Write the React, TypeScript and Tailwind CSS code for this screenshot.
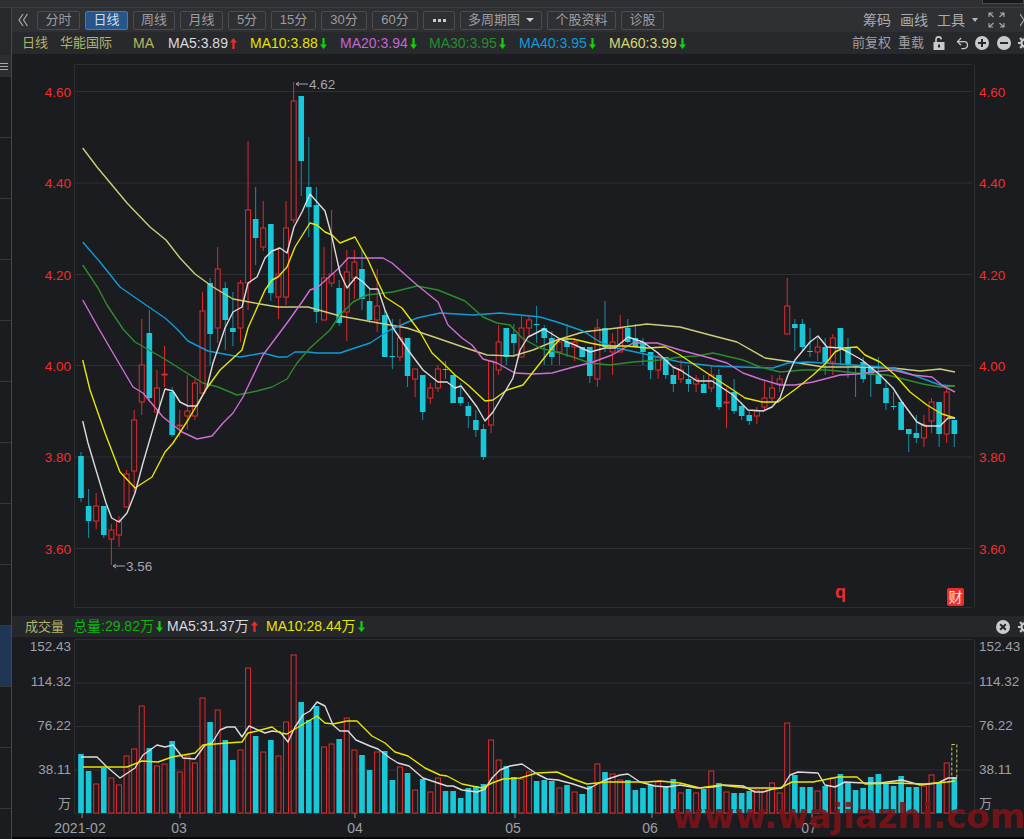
import { Undo2 } from "lucide-react"

type Candle = [number, number, number, number, number]

// high, body top, body bottom, low, 1 = red
const candles: Candle[] = [
  [452,456,498,502,0],[489,506,521,538,0],[493,506,521,529,1],[506,506,535,538,0],[524,530,539,565,1],
  [516,521,535,547,1],[470,474,507,507,1],[410,420,471,493,1],[319,365,402,415,1],[310,333,398,402,0],
  [370,388,412,413,1],[346,374,374,387,1],[387,392,435,437,0],[410,425,425,437,1],[375,411,416,430,1],
  [379,383,416,420,1],[292,311,393,393,1],[278,283,334,365,0],[247,269,328,343,1],[282,288,320,350,0],
  [292,328,332,346,0],[280,283,328,342,1],[141,210,283,310,1],[187,219,238,265,0],[201,228,247,251,1],
  [224,224,293,301,0],[247,274,297,319,1],[201,228,297,305,1],[82,101,220,223,1],[96,96,161,196,0],
  [137,187,207,237,0],[187,205,312,323,0],[247,278,320,320,1],[210,274,283,287,1],[280,288,323,326,0],
  [250,272,312,341,1],[250,262,278,299,1],[250,269,299,310,0],[288,301,320,323,0],[269,306,320,332,1],
  [310,315,357,357,0],[319,356,356,369,0],[319,338,357,361,1],[338,338,376,387,0],[369,369,379,397,1],
  [375,375,412,420,0],[383,388,398,404,1],[365,369,388,392,1],[361,369,369,379,0],[375,375,403,403,0],
  [383,397,403,406,0],[402,406,416,428,0],[410,420,430,437,0],[424,429,457,460,0],[361,361,425,433,1],
  [325,342,370,375,1],[328,328,357,365,0],[324,334,343,357,0],[316,328,357,357,1],[315,320,328,337,1],
  [306,324,324,343,0],[325,328,338,365,0],[331,338,357,365,0],[338,342,352,365,1],[324,342,347,357,0],
  [338,342,347,361,1],[347,347,357,357,0],[347,347,376,383,0],[319,328,379,387,1],[301,328,347,352,0],
  [333,342,352,375,1],[315,328,352,352,1],[319,328,342,343,0],[324,338,347,347,0],[338,342,352,365,0],
  [352,352,370,379,0],[352,357,370,379,1],[357,357,375,379,0],[367,375,384,392,0],[360,370,379,383,1],
  [365,379,384,392,0],[375,379,384,392,1],[375,384,393,393,0],[366,375,388,392,1],[369,375,407,410,0],
  [388,402,402,428,1],[379,392,411,414,0],[402,406,416,420,0],[410,415,421,425,0],[407,411,416,424,1],
  [380,398,407,411,1],[375,388,398,402,1],[375,379,384,392,1],[278,306,334,334,1],[319,324,328,351,0],
  [319,324,347,351,0],[328,351,351,357,0],[338,347,352,361,1],[338,347,362,375,0],[334,338,362,375,1],
  [328,328,348,365,0],[338,348,365,378,0],[366,366,366,397,0],[357,362,379,383,0],[366,366,375,397,0],
  [357,375,384,384,0],[379,388,403,410,0],[392,406,406,410,0],[402,402,430,430,0],[429,429,434,452,0],
  [415,433,438,443,0],[415,425,438,447,1],[398,402,421,433,1],[402,402,434,447,0],[388,392,434,443,1],
  [420,420,434,447,0],
]

// top of each volume bar, red ones are hollow
const volumes: [number, number][] = [
  [754,0],[771,0],[784,1],[768,0],[778,1],[785,1],[756,1],[749,1],[706,1],[748,0],
  [766,1],[764,1],[741,0],[772,1],[756,1],[763,1],[698,1],[722,0],[710,1],[740,0],
  [760,0],[750,1],[668,1],[736,0],[752,1],[740,0],[756,1],[722,1],[655,1],[702,0],
  [720,0],[706,0],[747,1],[744,1],[739,0],[718,1],[750,1],[755,0],[770,0],[752,1],
  [751,0],[780,0],[767,1],[773,0],[790,1],[779,0],[792,1],[778,1],[791,0],[791,0],
  [798,0],[788,0],[786,0],[784,0],[740,1],[760,1],[766,0],[777,0],[779,1],[772,1],
  [781,0],[780,0],[781,0],[788,1],[785,0],[792,1],[794,0],[786,0],[764,1],[772,0],
  [774,1],[780,1],[780,0],[790,0],[788,0],[785,0],[782,1],[786,0],[779,0],[793,1],
  [789,0],[793,1],[789,0],[771,1],[783,0],[792,1],[793,0],[793,0],[791,0],[790,1],
  [788,1],[783,1],[793,1],[723,1],[775,0],[787,0],[787,0],[791,1],[786,0],[778,1],
  [774,0],[783,0],[790,0],[788,0],[777,0],[774,0],[783,0],[786,0],[776,0],[787,0],
  [787,0],[786,1],[775,1],[783,0],[763,1],[778,0],
]

const ma5 = "82.7,421 88,443 96,470 106,503 111.7,518 119,522 127,513 135,493 143,463 157,415 165,389 173,391 180,402 188,406 197,406 207,387 213,363 220,343 225,328 233,312 242,307 248,283 257,277 265,258 272,251 280,248 287,253 294,227 302,212 310,194 317,202 325,211 332,237 340,273 347,288 356,277 363,282 370,289 378,289 385,310 393,328 408,350 423,370 438,382 447,382 455,388 461,386 468,395 477,407 485,421 493,412 506,390 513,378 520,350 528,337 544,329 560,339 575,345 590,352 605,348 615,348 628,337 643,342 658,353 673,367 680,370 697,381 712,381 733,395 748,410 763,411 772,407 780,398 788,375 795,360 810,342 818,336 827,347 840,348 848,352 862,360 880,375 893,388 902,402 917,422 925,426 940,426 948,418 955,418"
const ma10 = "82.7,360 90,390 105,433 120,472 135,488 152,477 165,452 173,443 188,420 207,388 220,370 242,350 248,328 265,290 272,280 278,277 287,267 295,247 310,223 317,225 325,232 332,235 340,243 355,237 368,260 377,280 385,297 402,308 420,332 432,353 447,367 455,375 468,385 485,401 493,400 507,390 523,385 537,367 552,348 560,339 573,339 590,343 605,346 627,346 647,348 665,347 680,355 695,365 710,375 730,388 745,398 762,402 778,402 797,388 813,375 827,362 835,352 843,348 857,347 865,355 880,362 895,375 910,392 927,405 942,414 955,418"
const ma20 = "82.7,300 99,329 113,353 133,387 143,393 163,417 182,432 197,439 212,436 223,423 233,413 243,397 263,355 287,323 302,302 310,290 318,287 339,268 348,258 383,258 392,263 417,285 438,302 448,325 462,338 472,345 483,359 497,363 515,373 533,374 552,373 570,368 593,362 612,355 633,343 657,343 680,350 710,358 727,363 743,373 760,379 780,385 795,385 813,382 840,375 857,374 873,372 893,370 913,375 932,377 943,386 955,392"
const ma30 = "82.7,265 98,288 107,305 123,329 135,342 163,358 190,375 203,383 218,387 237,395 257,391 272,387 287,379 297,363 310,348 330,330 340,315 353,302 367,295 393,292 417,286 438,290 465,301 483,317 497,323 510,325 522,338 540,348 560,353 573,357 590,363 610,365 633,362 660,360 680,357 697,356 713,353 743,360 760,367 780,372 803,370 827,370 857,373 887,375 907,380 923,384 940,387 955,386"
const ma40 = "82.7,242 100,262 120,287 143,303 165,318 177,329 188,341 208,351 240,357 263,353 278,357 287,357 295,352 308,352 317,353 340,353 370,343 390,330 417,318 440,313 473,315 500,313 540,317 557,322 583,331 600,342 617,348 640,353 680,362 713,366 740,367 773,368 788,363 807,362 840,364 867,366 893,368 913,375 940,385 955,386"
const ma60 = "82.7,148 97,167 127,203 150,227 166,240 180,258 195,274 213,287 233,299 260,304 278,307 308,307 340,316 373,322 407,328 437,338 463,347 487,355 513,356 533,350 557,340 583,332 617,328 647,324 680,327 710,335 737,342 765,358 793,362 823,367 857,367 893,368 920,371 940,369 955,372"
const volMa5 = "81,757 97,757 107,767 120,778 135,768 143,755 157,745 165,747 173,745 183,758 195,759 205,745 212,743 220,730 227,727 235,727 242,737 249,726 265,733 272,731 280,732 288,742 295,727 303,715 310,711 317,702 325,706 333,725 340,731 348,731 356,740 370,746 378,749 390,758 398,763 409,766 423,778 438,783 447,786 453,786 462,790 477,792 485,789 492,778 500,770 510,766 522,764 537,774 547,779 558,780 573,784 588,789 605,780 620,775 628,774 640,782 655,786 667,787 680,785 697,788 713,787 723,785 743,786 755,792 763,792 773,789 782,788 790,775 798,772 818,773 825,785 835,787 845,782 863,783 880,783 902,780 920,785 938,783 948,778 957,778"
const volMa10 = "83,767 127,767 142,761 158,762 172,757 195,753 203,745 227,743 242,742 248,733 257,731 272,727 280,733 287,734 295,729 317,716 325,723 333,724 347,721 357,721 372,736 385,743 395,752 408,756 425,768 440,775 447,776 462,784 482,788 492,783 503,779 520,778 537,773 557,772 573,779 587,784 607,782 647,782 660,781 680,783 700,788 720,785 747,788 780,788 792,782 813,782 838,777 857,777 865,784 893,783 925,784 947,782 955,781"

const candleX = (i: number) => 81 + i * 7.594

const toolbarButtons = [
  { label: "分时", w: "w-[43px]" },
  { label: "日线", w: "w-[43px]", active: true },
  { label: "周线", w: "w-[42px]" },
  { label: "月线", w: "w-[43px]" },
  { label: "5分", w: "w-[38px]" },
  { label: "15分", w: "w-[45px]" },
  { label: "30分", w: "w-[46px]" },
  { label: "60分", w: "w-[46px]" },
]

function Arrow({ up }: { up?: boolean }) {
  return (
    <svg width="7" height="11" viewBox="0 0 7 11" className="ml-[2px] shrink-0">
      {up ? (
        <path d="M3.5 0 L7 4.5 H4.6 V11 H2.4 V4.5 H0 Z" fill="#f02a2a" />
      ) : (
        <path d="M3.5 11 L7 6.5 H4.6 V0 H2.4 V6.5 H0 Z" fill="#10d010" />
      )}
    </svg>
  )
}

function RoundIcon({ kind }: { kind: "plus" | "minus" | "x" }) {
  return (
    <svg width="14" height="14" viewBox="0 0 14 14" className="shrink-0">
      <circle cx="7" cy="7" r="7" fill="#c9cacc" />
      {kind === "plus" && <path d="M3 7 H11 M7 3 V11" stroke="#26272a" strokeWidth="2" />}
      {kind === "minus" && <path d="M3 7 H11" stroke="#26272a" strokeWidth="2" />}
      {kind === "x" && <path d="M4.2 4.2 L9.8 9.8 M9.8 4.2 L4.2 9.8" stroke="#26272a" strokeWidth="2" />}
    </svg>
  )
}

function Gear() {
  return (
    <svg width="14" height="14" viewBox="0 0 14 14" className="shrink-0">
      <circle cx="7" cy="7" r="3.6" fill="none" stroke="#c9cacc" strokeWidth="2.4" />
      <path d="M7 0 V14 M0 7 H14 M2 2 L12 12 M12 2 L2 12" stroke="#c9cacc" strokeWidth="2.2" strokeDasharray="2.4 9.2" />
    </svg>
  )
}

function OpenLock() {
  return (
    <svg width="12" height="14" viewBox="0 0 12 14" className="mr-[10px] shrink-0">
      <path d="M3 6.5 V3.6 A2.6 2.6 0 0 1 8.2 3.4" fill="none" stroke="#c9cacc" strokeWidth="1.6" />
      <path fillRule="evenodd" d="M0.5 6 H11.5 V14 H0.5 Z M5 8.5 V11.5 H7 V8.5 Z" fill="#c9cacc" />
    </svg>
  )
}

function Sidebar() {
  return (
    <div className="flex w-[12px] shrink-0 flex-col border-r border-[#46474b] bg-[#1b1c20]">
      <div className="h-[47px] bg-[#27282b]" />
      <div className="flex h-[22px] items-center bg-[#2d2e31]">
        <div className="flex w-[8px] flex-col gap-[2px]">
          <div className="h-px bg-[#a9abaf]" />
          <div className="h-px bg-[#a9abaf]" />
          <div className="h-px bg-[#a9abaf]" />
        </div>
      </div>
      {[0, 1, 2, 3, 4, 5, 6, 7, 8, 9, 10, 11].map((i) => (
        <div key={i} className={`h-[61px] shrink-0 border-b border-[#36373b] ${i === 9 ? "bg-[#1f3654]" : ""}`} />
      ))}
    </div>
  )
}

function Toolbar() {
  return (
    <div className="flex h-[24px] shrink-0 items-center overflow-hidden bg-[#2f3033] text-[13px] text-[#9c9ea3]">
      <svg width="10" height="14" viewBox="0 0 10 14" className="ml-[6px] mr-[9px] shrink-0" fill="none" stroke="#a9abaf" strokeWidth="1.2">
        <path d="M5 1 L1 7 L5 13 M9.5 1 L5.5 7 L9.5 13" />
      </svg>
      <div className="flex gap-[5px]">
        {toolbarButtons.map((b) => (
          <div
            key={b.label}
            className={`flex h-[19px] items-center justify-center rounded-[2px] border ${b.w} ${
              b.active ? "border-[#1e86de] bg-[#25578c] text-[#d5dbe2]" : "border-[#4a4b4f]"
            }`}
          >
            {b.label}
          </div>
        ))}
        <div className="flex h-[19px] w-[32px] items-center justify-center gap-[2px] rounded-[2px] border border-[#4a4b4f]">
          <span className="h-[3px] w-[3px] bg-[#c9cacc]" />
          <span className="h-[3px] w-[3px] bg-[#c9cacc]" />
          <span className="h-[3px] w-[3px] bg-[#c9cacc]" />
        </div>
        <div className="flex h-[19px] w-[82px] items-center justify-center gap-[6px] rounded-[2px] border border-[#4a4b4f]">
          多周期图
          <span className="h-0 w-0 border-x-[4px] border-t-[4px] border-x-transparent border-t-[#c9cacc]" />
        </div>
        <div className="flex h-[19px] w-[69px] items-center justify-center rounded-[2px] border border-[#4a4b4f]">个股资料</div>
        <div className="flex h-[19px] w-[43px] items-center justify-center rounded-[2px] border border-[#4a4b4f]">诊股</div>
      </div>
      <div className="ml-auto flex items-center text-[14px] text-[#a9abaf]">
        <span className="w-[37px]">筹码</span>
        <span className="w-[37px]">画线</span>
        <span className="w-[35px]">工具</span>
        <span className="h-0 w-0 border-x-[3.5px] border-t-[4px] border-x-transparent border-t-[#b5b6b9]" />
        <svg width="17" height="16" viewBox="0 0 17 16" fill="none" stroke="#a9abaf" strokeWidth="1.1" className="ml-[10px]">
          <path d="M1 5 V1 H5 M1 1 L5.5 5 M16 5 V1 H12 M16 1 L11.5 5 M1 11 V15 H5 M1 15 L5.5 11 M16 11 V15 H12 M16 15 L11.5 11" />
        </svg>
        <svg width="9" height="14" viewBox="0 0 9 14" fill="none" stroke="#a9abaf" strokeWidth="1.2" className="ml-[15px] mr-[-5px]">
          <path d="M0 1 L8 13 M8 1 L0 13" />
        </svg>
      </div>
    </div>
  )
}

function MaBar() {
  return (
    <div className="flex h-[22px] shrink-0 items-center overflow-hidden bg-[#28292c] pl-[10px] text-[14px]">
      <span className="w-[38px] shrink-0 text-[13px] text-[#b3b56c]">日线</span>
      <span className="w-[73px] shrink-0 text-[13px] text-[#b3b56c]">华能国际</span>
      <span className="w-[35px] shrink-0 text-[#b8b85e]">MA</span>
      <span className="flex w-[82px] shrink-0 items-center text-[#d8dade]">MA5:3.89<Arrow up /></span>
      <span className="flex w-[90px] shrink-0 items-center text-[#e4e400]">MA10:3.88<Arrow /></span>
      <span className="flex w-[89px] shrink-0 items-center text-[#c665d6]">MA20:3.94<Arrow /></span>
      <span className="flex w-[90px] shrink-0 items-center text-[#238e2d]">MA30:3.95<Arrow /></span>
      <span className="flex w-[90px] shrink-0 items-center text-[#0f9bd6]">MA40:3.95<Arrow /></span>
      <span className="flex w-[90px] shrink-0 items-center text-[#d8d870]">MA60:3.99<Arrow /></span>
      <div className="ml-auto flex items-center text-[13px] text-[#9c9ea3]">
        <span className="w-[46px]">前复权</span>
        <span className="w-[35px]">重载</span>
        <OpenLock />
        <Undo2 size={15} strokeWidth={2} className="mr-[5px] text-[#c9cacc]" />
        <RoundIcon kind="plus" />
        <span className="w-[8px]" />
        <RoundIcon kind="minus" />
        <span className="w-[7px]" />
        <span className="mr-[-8px]"><Gear /></span>
      </div>
    </div>
  )
}

function PriceChart() {
  const grid = [
    { y: 91.5, label: "4.60" },
    { y: 183, label: "4.40" },
    { y: 274.5, label: "4.20" },
    { y: 365.5, label: "4.00" },
    { y: 457, label: "3.80" },
    { y: 548.5, label: "3.60" },
  ]
  return (
    <svg width="1012" height="562" viewBox="12 54 1012 562" className="block shrink-0">
      <path d="M74.5 64.5 V607.5 H972.5 M74.5 64.5 H972.5 M974.5 64.5 V607.5" fill="none" stroke="#2c2d31" />
      {grid.map((g) => (
        <g key={g.label}>
          <line x1="74" x2="972" y1={g.y} y2={g.y} stroke="#2e2f33" strokeWidth="1.2" />
          <text x="71" y={g.y + 5} textAnchor="end" fontSize="13.5" fill="#f42c2e">{g.label}</text>
          <text x="979" y={g.y + 5} fontSize="13.5" fill="#f42c2e">{g.label}</text>
        </g>
      ))}
      {candles.map(([hi, top, bot, lo, red], i) => {
        const x = candleX(i)
        return (
          <g key={i}>
            <line x1={x} x2={x} y1={hi} y2={lo} stroke={red ? "#d92b2e" : "#1a8ea3"} />
            {red ? (
              <rect x={x - 2.5} y={top} width="5" height={Math.max(bot - top, 1)} fill="#1b1c20" stroke="#e22b2e" />
            ) : (
              <rect x={x - 2.8} y={top} width="5.6" height={Math.max(bot - top, 1)} fill="#19c8d8" />
            )}
          </g>
        )
      })}
      <g fill="none" strokeWidth="1.4" strokeLinejoin="round">
        <polyline points={ma60} stroke="#cdcd78" />
        <polyline points={ma40} stroke="#0f9bd6" />
        <polyline points={ma30} stroke="#2c8c2c" />
        <polyline points={ma20} stroke="#cf6fd6" />
        <polyline points={ma10} stroke="#e6e600" />
        <polyline points={ma5} stroke="#dcdcdc" />
      </g>
      <path d="M296 84 H308 M296 84 L299 82 M296 84 L299 86" fill="none" stroke="#a3a6ab" />
      <text x="309" y="89" fontSize="13.5" fill="#a3a6ab">4.62</text>
      <path d="M113 566 H125 M113 566 L116 564 M113 566 L116 568" fill="none" stroke="#a3a6ab" />
      <text x="126" y="571" fontSize="13.5" fill="#a3a6ab">3.56</text>
      <text x="835" y="598" fontSize="18" fontWeight="700" fill="#ee2a2c">q</text>
      <rect x="947" y="588" width="17" height="18" rx="2" fill="#ee2c2e" />
      <text x="955.5" y="602" textAnchor="middle" fontSize="14" fill="#ffe4e4">财</text>
    </svg>
  )
}

function VolumeHeader() {
  return (
    <div className="flex h-[21px] shrink-0 items-center overflow-hidden bg-[#26272a] pl-[13px] text-[14px]">
      <span className="w-[48px] shrink-0 text-[13px] text-[#b3b56c]">成交量</span>
      <span className="flex w-[94px] shrink-0 items-center text-[#0cb40c]">总量:29.82万<Arrow /></span>
      <span className="flex w-[99px] shrink-0 items-center text-[#d8dade]">MA5:31.37万<Arrow up /></span>
      <span className="flex w-[99px] shrink-0 items-center text-[#e4e400]">MA10:28.44万<Arrow /></span>
      <div className="ml-auto flex items-center">
        <RoundIcon kind="x" />
        <span className="w-[8px]" />
        <span className="mr-[-8px]"><Gear /></span>
      </div>
    </div>
  )
}

function VolumeChart() {
  const labels = [
    { y: 651, text: "152.43" },
    { y: 686, text: "114.32" },
    { y: 730, text: "76.22" },
    { y: 774, text: "38.11" },
  ]
  const months = [
    { x: 80, tick: 82, text: "2021-02" },
    { x: 179, tick: 180, text: "03" },
    { x: 355, tick: 355, text: "04" },
    { x: 513, tick: 515, text: "05" },
    { x: 650, tick: 652, text: "06" },
    { x: 809, tick: 812, text: "07" },
  ]
  return (
    <svg width="1012" height="200" viewBox="12 637 1012 200" className="block shrink-0">
      <path d="M74.5 639.5 H972.5 M74.5 639.5 V813.5 H972.5 M974.5 639.5 V813.5" fill="none" stroke="#2c2d31" />
      {[683, 726.5, 770].map((y) => (
        <line key={y} x1="74" x2="972" y1={y} y2={y} stroke="#2e2f33" strokeWidth="1.2" />
      ))}
      {labels.map((l) => (
        <g key={l.text} fontSize="13.5" fill="#9da0a6">
          <text x="71" y={l.y} textAnchor="end">{l.text}</text>
          <text x="979" y={l.y}>{l.text}</text>
        </g>
      ))}
      <text x="71" y="808" textAnchor="end" fontSize="13" fill="#9da0a6">万</text>
      <text x="979" y="808" fontSize="13" fill="#9da0a6">万</text>
      {months.map((m) => (
        <g key={m.text}>
          <line x1={m.tick} x2={m.tick} y1="813" y2="818" stroke="#8c8f95" />
          <text x={m.x} y="833" textAnchor="middle" fontSize="14" fill="#9da0a6">{m.text}</text>
        </g>
      ))}
      {volumes.map(([top, red], i) => {
        const x = candleX(i)
        return red ? (
          <rect key={i} x={x - 2.5} y={top} width="5" height={813 - top} fill="#1b1c20" stroke="#e22b2e" />
        ) : (
          <rect key={i} x={x - 2.8} y={top} width="5.6" height={813 - top} fill="#19c8d8" />
        )
      })}
      <rect x="951.8" y="744.5" width="5" height="33" fill="none" stroke="#c8c86a" strokeDasharray="3 2" />
      <g fill="none" strokeWidth="1.4" strokeLinejoin="round">
        <polyline points={volMa5} stroke="#dcdcdc" />
        <polyline points={volMa10} stroke="#e6e600" />
      </g>
    </svg>
  )
}

export default function App() {
  return (
    <div className="relative flex h-[839px] w-[1024px] flex-col overflow-hidden bg-[#1b1c20] font-['Liberation_Sans','Noto_Sans_CJK_SC',sans-serif]">
      <div className="flex h-[8px] shrink-0 justify-end border-b border-[#3c3d40] bg-[#2f3033]">
        <div className="h-[4px] w-[42px] border-x border-b border-[#47484c] bg-[#17181b]" />
      </div>
      <div className="flex min-h-0 flex-1">
        <Sidebar />
        <div className="flex w-[1012px] flex-col">
          <Toolbar />
          <MaBar />
          <PriceChart />
          <VolumeHeader />
          <VolumeChart />
          <div className="h-[2px] bg-[#08080a]" />
        </div>
      </div>
      <div className="absolute left-[672px] top-[796px] whitespace-nowrap font-['DejaVu_Sans',sans-serif] text-[34px] font-bold leading-[40px] text-[#7e1216]/90">
        www.wajiazhi.com
      </div>
    </div>
  )
}
